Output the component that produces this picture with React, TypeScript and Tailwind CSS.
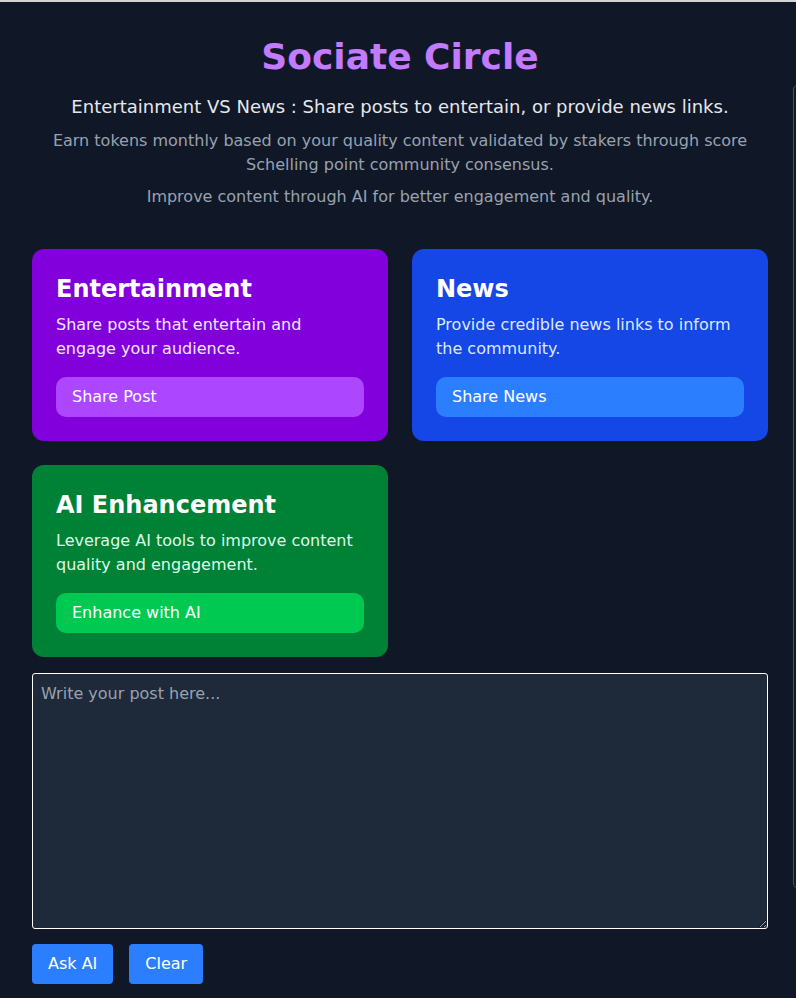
import React, { useState } from "react";

type Card = {
  title: string;
  text: string;
  action: string;
  box: string;
  body: string;
  button: string;
};

const cards: Card[] = [
  {
    title: "Entertainment",
    text: "Share posts that entertain and engage your audience.",
    action: "Share Post",
    box: "bg-purple-700",
    body: "text-purple-100",
    button: "bg-purple-500",
  },
  {
    title: "News",
    text: "Provide credible news links to inform the community.",
    action: "Share News",
    box: "bg-blue-700",
    body: "text-blue-100",
    button: "bg-blue-500",
  },
  {
    title: "AI Enhancement",
    text: "Leverage AI tools to improve content quality and engagement.",
    action: "Enhance with AI",
    box: "bg-green-700",
    body: "text-green-100",
    button: "bg-green-500",
  },
];

function FeatureCard({ card }: { card: Card }) {
  return (
    <div className={`${card.box} rounded-xl p-6`}>
      <h2 className="text-2xl font-bold text-white mb-2">{card.title}</h2>
      <p className={`${card.body} text-base leading-6`}>{card.text}</p>
      <button
        className={`${card.button} mt-4 w-full rounded-[10px] px-4 py-2 text-left text-base text-white`}
      >
        {card.action}
      </button>
    </div>
  );
}

export default function App() {
  const [post, setPost] = useState("");

  return (
    <div className="relative min-h-screen overflow-hidden bg-gray-900 font-['DejaVu_Sans',sans-serif]">
      <div className="h-[2px] bg-[#d4d4d4]" />
      {/* panel peeking in from the right */}
      <div className="absolute left-[793px] top-[84px] h-[805px] w-[200px] rounded-md border border-gray-600" />

      <div className="ml-8 w-[736px] pt-[35px] pb-4">
        <header className="mb-10 text-center">
          <h1 className="mb-4 text-4xl font-bold text-purple-400">Sociate Circle</h1>
          <p className="mb-2 text-lg text-gray-200">
            Entertainment VS News : Share posts to entertain, or provide news links.
          </p>
          <p className="text-base text-gray-400">
            Earn tokens monthly based on your quality content validated by stakers through score
            Schelling point community consensus.
          </p>
          <p className="mt-2 text-base text-gray-400">
            Improve content through AI for better engagement and quality.
          </p>
        </header>

        <div className="grid grid-cols-2 gap-6">
          {cards.map((c) => (
            <FeatureCard key={c.title} card={c} />
          ))}
        </div>

        <textarea
          value={post}
          onChange={(e) => setPost(e.target.value)}
          placeholder="Write your post here..."
          className="mt-4 block h-64 w-full rounded-[3px] border border-white bg-gray-800 p-2 text-base text-white placeholder:text-gray-400"
        />

        <div className="mt-[15px] flex gap-4">
          <button className="rounded bg-blue-500 px-4 py-2 text-base text-white">Ask AI</button>
          <button
            className="rounded bg-blue-500 px-4 py-2 text-base text-white"
            onClick={() => setPost("")}
          >
            Clear
          </button>
        </div>
      </div>
    </div>
  );
}
